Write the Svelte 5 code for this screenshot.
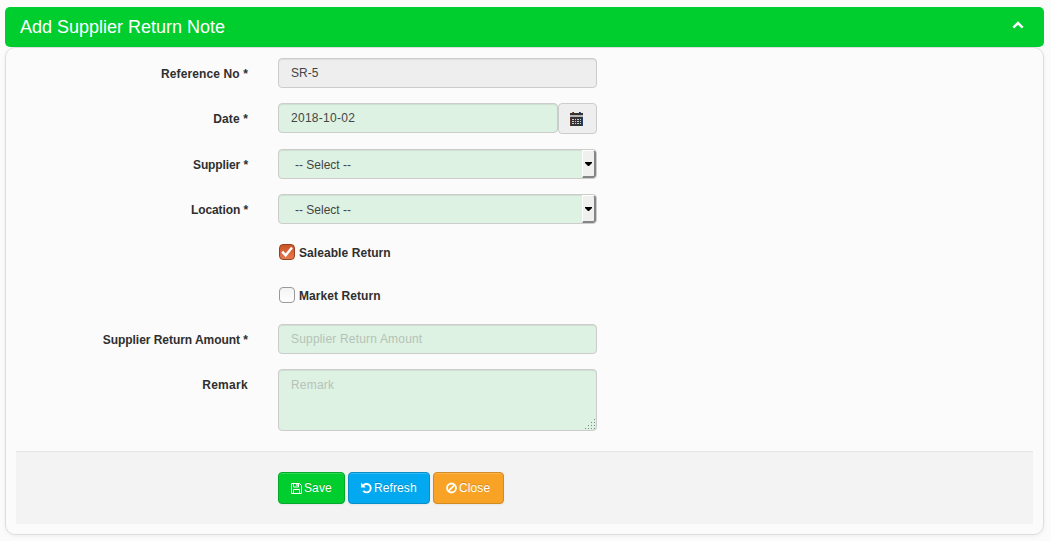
<script>
  let saleable = $state(true);
  let market = $state(false);
  const selects = ['Supplier *', 'Location *'];
</script>

{#snippet tick()}
  <svg width="14" height="14" viewBox="0 0 14 14"><path d="M2.2 6.6 5.6 10.4 12 2.6" fill="none" stroke="#fff" stroke-width="2.4" /></svg>
{/snippet}

<div class="page">
  <header>
    <h3>Add Supplier Return Note</h3>
    <svg class="chev" width="12" height="8" viewBox="0 0 12 8"><path d="M1.3 6.6 6 2.1l4.7 4.5" fill="none" stroke="#fff" stroke-width="2.5" /></svg>
  </header>
  <form class="panel">
    <div class="row">
      <span class="label wide">Reference No *</span>
      <div class="field grey">SR-5</div>
    </div>
    <div class="row r46">
      <span class="label wide">Date *</span>
      <div class="group">
        <div class="field date">2018-10-02</div>
        <div class="addon">
          <svg width="13" height="14" viewBox="0 0 13 14" shape-rendering="crispEdges">
            <path d="M2 0h2v1H2zM9 0h2v1H9zM0 1h13v13H0z" fill="#333" />
            <path d="M2 0h1v1H2z" fill="#a45c2c" />
            <path d="M10 0h1v1h-1z" fill="#2c5ca4" />
            <path d="M0 3h13v2H0z" fill="#b5b5b5" />
            <path d="M0 5h1v9H0z" fill="#5a3a2c" />
            <path d="M12 5h1v9h-1z" fill="#23406b" />
            <path d="M2 7h2v1H2zM5 7h1v1H5zM7 7h2v1H7zM10 7h1v1h-1zM2 9h2v1H2zM5 9h1v1H5zM7 9h2v1H7zM10 9h1v1h-1zM2 11h2v1H2zM5 11h1v1H5zM7 11h2v1H7zM10 11h1v1h-1z" fill="#c6ccd2" />
          </svg>
        </div>
      </div>
    </div>
    {#each selects as name}
      <div class="row">
        <span class="label narrow">{name}</span>
        <div class="field select">
          <span>-- Select --</span>
          <span class="arrow"><svg width="7" height="4" viewBox="0 0 7 4"><path d="M0 0h7v1L4 4H3L0 1z" fill="#000" /></svg></span>
        </div>
      </div>
    {/each}
    <div class="checks">
      <label><input type="checkbox" bind:checked={saleable} /><span class="box">{#if saleable}{@render tick()}{/if}</span>Saleable Return</label>
      <label><input type="checkbox" bind:checked={market} /><span class="box">{#if market}{@render tick()}{/if}</span>Market Return</label>
    </div>
    <div class="row">
      <span class="label amount">Supplier Return Amount *</span>
      <div class="field hint">Supplier Return Amount</div>
    </div>
    <div class="row last">
      <span class="label remark">Remark</span>
      <div class="field hint area">
        <span>Remark</span>
        <svg width="10" height="10" viewBox="0 0 10 10" shape-rendering="crispEdges"><path d="M9 0h1v1H9zM9 3h1v1H9zM6 3h1v1H6zM9 6h1v1H9zM6 6h1v1H6zM3 6h1v1H3zM9 9h1v1H9zM6 9h1v1H6zM3 9h1v1H3zM0 9h1v1H0z" fill="#7c857f" /></svg>
      </div>
    </div>
    <footer>
      <button type="button" class="save">
        <svg width="11" height="12" viewBox="0 0 11 12" fill="none" stroke="#fff"><path d="M.5 1.5h8l2 2v8H.5zM2.5 1.5v3.5h5V1.5M2.5 11.5V7.5h6v4" /><path d="M6 2v2" stroke-width="1.2" /></svg>Save
      </button>
      <button type="button" class="refresh">
        <svg width="11" height="12" viewBox="0 0 11 12"><path d="M2 3.9A4.2 4.2 0 1 1 2.3 8.8" fill="none" stroke="#fff" stroke-width="1.9" /><path d="M0 .8v4.8h4.8z" fill="#fff" /></svg>Refresh
      </button>
      <button type="button" class="close">
        <svg width="11" height="12" viewBox="0 0 11 12" fill="none" stroke="#fff" stroke-width="1.8"><circle cx="5.5" cy="6" r="4.5" /><path d="M2.3 9.2 8.7 2.8" /></svg>Close
      </button>
    </footer>
  </form>
</div>

<style>
  :global(body) { background: #fbfbfb; }
  .page {
    box-sizing: border-box;
    height: 541px;
    padding: 7px 7px 0 5px;
    font: 12px/20px "Liberation Sans", Arial, sans-serif;
    color: #333;
    overflow: hidden;
  }
  header {
    height: 40px;
    box-sizing: border-box;
    padding: 0 20px 0 15px;
    display: flex;
    align-items: center;
    justify-content: space-between;
    background: #00cd2e;
    border-radius: 5px;
    color: #fff;
  }
  h3 { margin: 0; font-size: 18px; font-weight: 400; }
  .chev { margin-bottom: 4px; }
  .panel {
    box-sizing: border-box;
    height: 488px;
    padding: 10px 10px 0;
    border: 1px solid #ddd;
    border-radius: 10px;
    box-shadow: 0 1px 4px rgba(0, 0, 0, 0.06);
  }
  .row { display: flex; height: 45px; }
  .r46 { height: 46px; }
  .label { width: 232px; margin-right: 30px; padding-top: 6px; text-align: right; font-weight: 700; color: #2f2f2f; }
  .wide { letter-spacing: 0.12px; }
  .narrow { letter-spacing: -0.1px; }
  .amount { letter-spacing: -0.04px; }
  .remark { letter-spacing: 0.3px; }
  .field {
    box-sizing: border-box;
    width: 319px;
    height: 30px;
    padding: 4px 12px;
    border: 1px solid #ccc;
    border-radius: 4px;
    background: #ddf2e2;
    box-shadow: inset 0 1px 1px rgba(0, 0, 0, 0.075);
    color: #444;
  }
  .grey { background: #eee; }
  .hint { color: #b5c2b8; letter-spacing: 0.18px; }
  .date { letter-spacing: 0.27px; }
  .group { display: flex; }
  .group .field { width: 280px; }
  .addon {
    box-sizing: border-box;
    width: 39px;
    height: 31px;
    display: flex;
    align-items: center;
    justify-content: center;
    padding-right: 2px;
    border: 1px solid #ccc;
    border-radius: 4px;
    background: #eee;
  }
  .select { display: flex; justify-content: space-between; padding: 0 0 0 16px; overflow: hidden; }
  .select > span:first-child { padding-top: 5px; }
  .arrow {
    box-sizing: border-box;
    width: 14px;
    height: 28px;
    display: flex;
    align-items: center;
    justify-content: center;
    background: #f0f0ee;
    border: solid;
    border-width: 1px 2px 2px 1px;
    border-color: #fff #858585 #858585 #fff;
    border-radius: 0 3px 3px 0;
  }
  .checks { height: 85px; padding-left: 263px; }
  label {
    box-sizing: border-box;
    height: 43px;
    padding-top: 4px;
    display: flex;
    align-items: flex-start;
    font-weight: 700;
    color: #2f2f2f;
    letter-spacing: 0.07px;
  }
  input { appearance: none; width: 0; height: 0; margin: 0; }
  .box {
    box-sizing: border-box;
    width: 16px;
    height: 16px;
    margin: 1px 4px 0 0;
    border: 1px solid #999;
    border-radius: 4px;
    background: linear-gradient(#f3f3f3, #fff);
  }
  .box svg { display: block; }
  input:checked + .box { border-color: #97411f; background: linear-gradient(#cc5327, #e47a50); }
  .last { height: 82px; }
  .area { height: 62px; padding: 5px 1px 1px 12px; display: flex; justify-content: space-between; }
  .area svg { align-self: flex-end; }
  footer {
    box-sizing: border-box;
    height: 73px;
    padding: 20px 0 0 262px;
    display: flex;
    gap: 3px;
    background: #f3f3f3;
    border-top: 1px solid #e5e5e5;
  }
  button {
    box-sizing: border-box;
    height: 32px;
    padding: 0 0 0 12px;
    display: flex;
    align-items: center;
    justify-content: flex-start;
    gap: 2px;
    border: 1px solid;
    border-radius: 4px;
    font: inherit;
    letter-spacing: 0.1px;
    color: #fff;
    text-shadow: 0 -1px 0 rgba(0, 0, 0, 0.18);
    box-shadow: inset 0 1px 0 rgba(255, 255, 255, 0.2), 0 1px 2px rgba(0, 0, 0, 0.05);
  }
  .save { width: 67px; background: #00cd2e; border-color: #04a92b; }
  .refresh { width: 82px; background: #03a9f0; border-color: #068fc9; }
  .close { width: 71px; background: #f8a326; border-color: #d38a20; }
</style>
